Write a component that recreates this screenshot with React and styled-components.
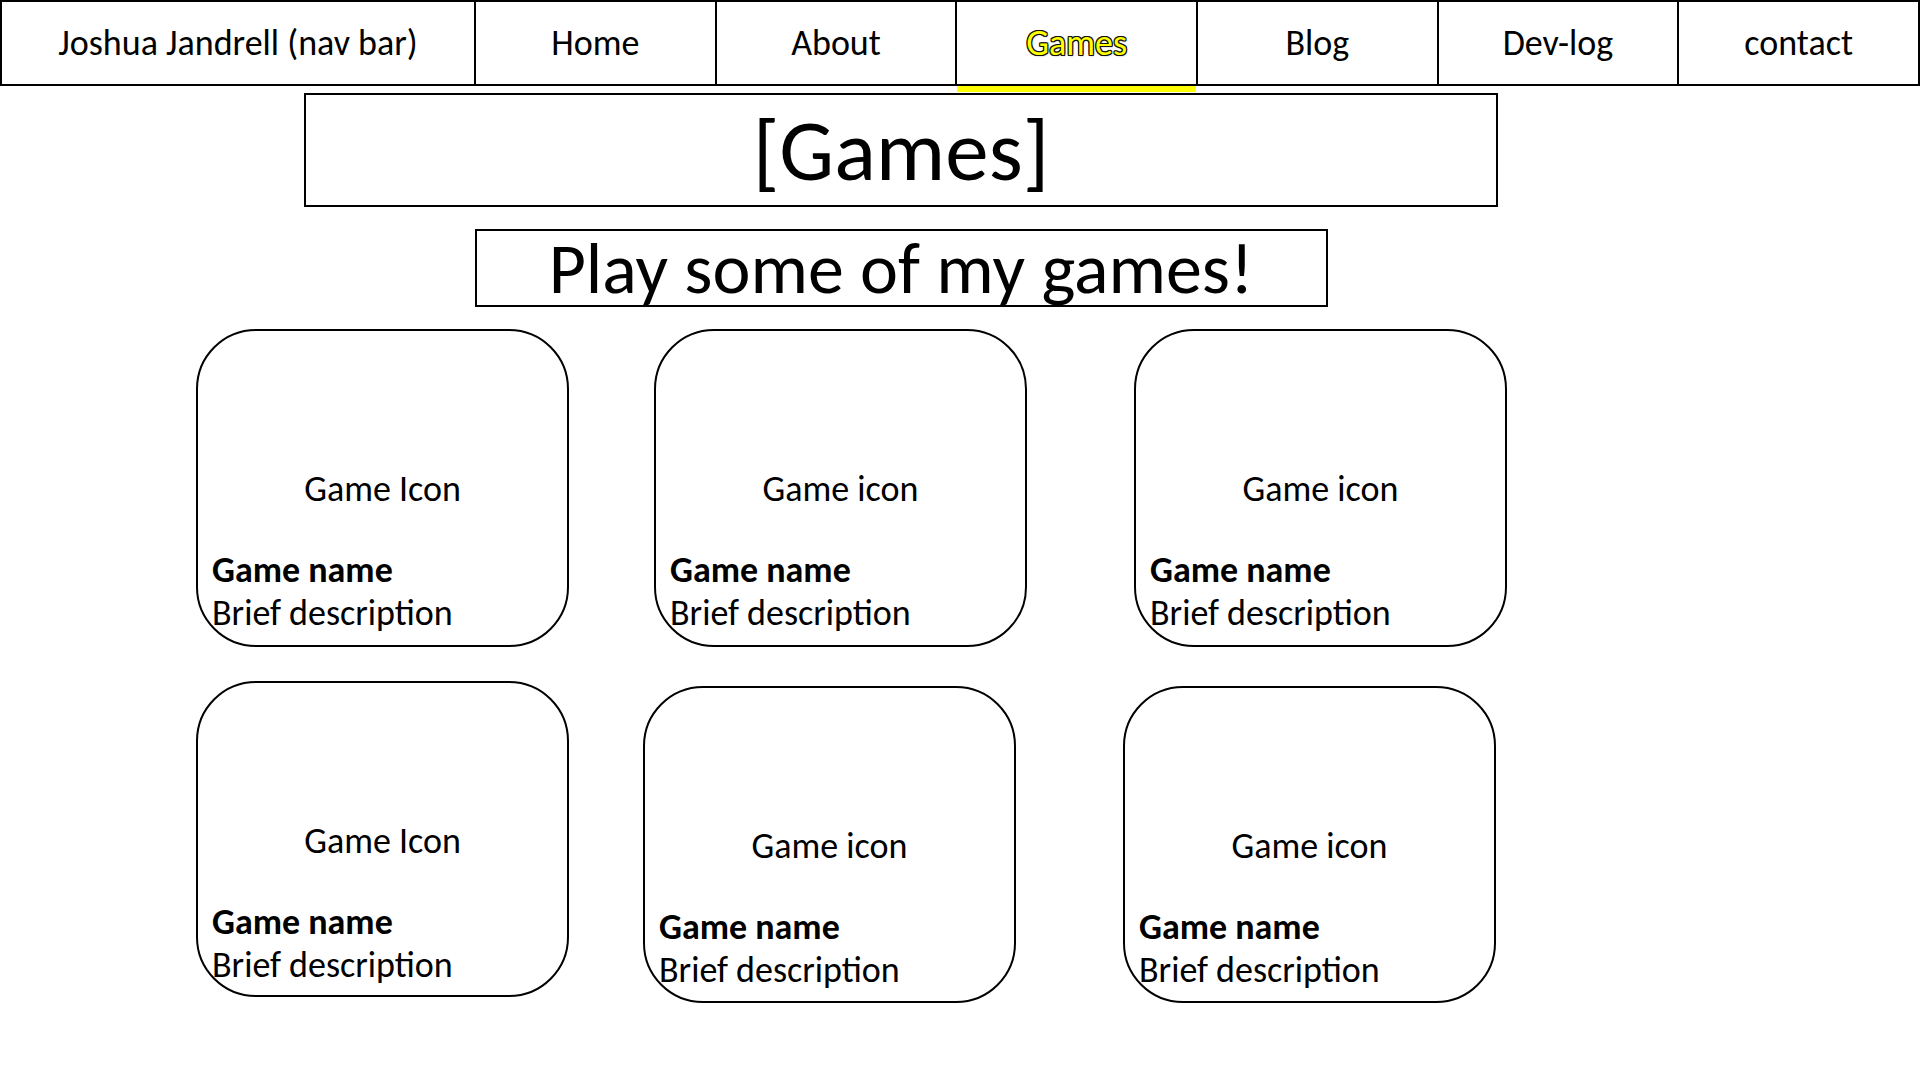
import styled, { createGlobalStyle } from 'styled-components'

const GlobalStyle = createGlobalStyle`
  body {
    margin: 0;
    background: #fff;
    color: #000;
    font-family: Carlito, 'Open Sans', sans-serif;
  }
`

const navItems = ['Home', 'About', 'Games', 'Blog', 'Dev-log', 'contact']

const games = [
  [
    { icon: 'Game Icon', dx: 0, dy: 0, h: 318 },
    { icon: 'Game icon', dx: 85, dy: 0, h: 318 },
    { icon: 'Game icon', dx: 107, dy: 0, h: 318 },
  ],
  [
    { icon: 'Game Icon', dx: 0, dy: 0, h: 316 },
    { icon: 'Game icon', dx: 74, dy: 5, h: 317 },
    { icon: 'Game icon', dx: 107, dy: 5, h: 317 },
  ],
]

function App() {
  return (
    <>
      <GlobalStyle />
      <Nav>
        <Brand>Joshua Jandrell (nav bar)</Brand>
        {navItems.map(item =>
          <NavItem key={item} $active={item === 'Games'}>{item}</NavItem>
        )}
      </Nav>
      <Header>
        <PageTitle>[Games]</PageTitle>
        <Tagline>Play some of my games!</Tagline>
      </Header>
      <Grid>
        {games.map((row, r) =>
          <Row key={r}>
            {row.map((game, i) =>
              <Card key={i} $dx={game.dx} $dy={game.dy} $h={game.h}>
                <IconLabel>{game.icon}</IconLabel>
                <Name>Game name</Name>
                <Description>Brief description</Description>
              </Card>
            )}
          </Row>
        )}
      </Grid>
    </>
  )
}

const Nav = styled.nav`
  display: grid;
  grid-template-columns: 472px repeat(6, 1fr);
  height: 82px;
  border: 2px solid #000;
  font-size: 36px;
`

const Brand = styled.div`
  display: flex;
  align-items: center;
  justify-content: center;
`

const NavItem = styled.div`
  position: relative;
  display: flex;
  align-items: center;
  justify-content: center;
  border-left: 2px solid #000;

  ${p => p.$active && `
    color: #ffff00;
    text-shadow:
      1px 0 0 #111, -1px 0 0 #111, 0 1px 0 #111, 0 -1px 0 #111,
      1px 1px 0 #111, -1px -1px 0 #111, 1px -1px 0 #111, -1px 1px 0 #111,
      1px 1px 2px rgba(0, 0, 0, .35);

    &::after {
      content: '';
      position: absolute;
      left: 0;
      right: 0;
      bottom: -8px;
      height: 6px;
      background: #ffff00;
    }
  `}
`

const Header = styled.header`
  width: 1802px;
  display: flex;
  flex-direction: column;
  align-items: center;
  padding-top: 7px;
`

const PageTitle = styled.h1`
  box-sizing: border-box;
  width: 1194px;
  height: 114px;
  margin: 0;
  border: 2px solid #000;
  display: flex;
  align-items: center;
  justify-content: center;
  font-size: 87px;
  font-weight: 400;
`

const Tagline = styled.h2`
  box-sizing: border-box;
  width: 853px;
  height: 78px;
  margin: 22px 0 0;
  border: 2px solid #000;
  display: flex;
  align-items: center;
  justify-content: center;
  font-size: 72px;
  font-weight: 400;
`

const Grid = styled.section`
  display: flex;
  flex-direction: column;
  gap: 34px;
  padding: 22px 0 0 196px;
`

const Row = styled.div`
  display: flex;
  align-items: flex-start;
`

const Card = styled.article`
  box-sizing: border-box;
  width: 373px;
  height: ${p => p.$h}px;
  margin-left: ${p => p.$dx}px;
  margin-top: ${p => p.$dy}px;
  border: 2px solid #000;
  border-radius: 60px;
  padding: 137px 14px 0;
  display: flex;
  flex-direction: column;
  font-size: 36px;
  line-height: 43px;
`

const IconLabel = styled.div`
  text-align: center;
  margin-bottom: 38px;
`

const Name = styled.div`
  font-weight: 700;
`

const Description = styled.div``

export default App
